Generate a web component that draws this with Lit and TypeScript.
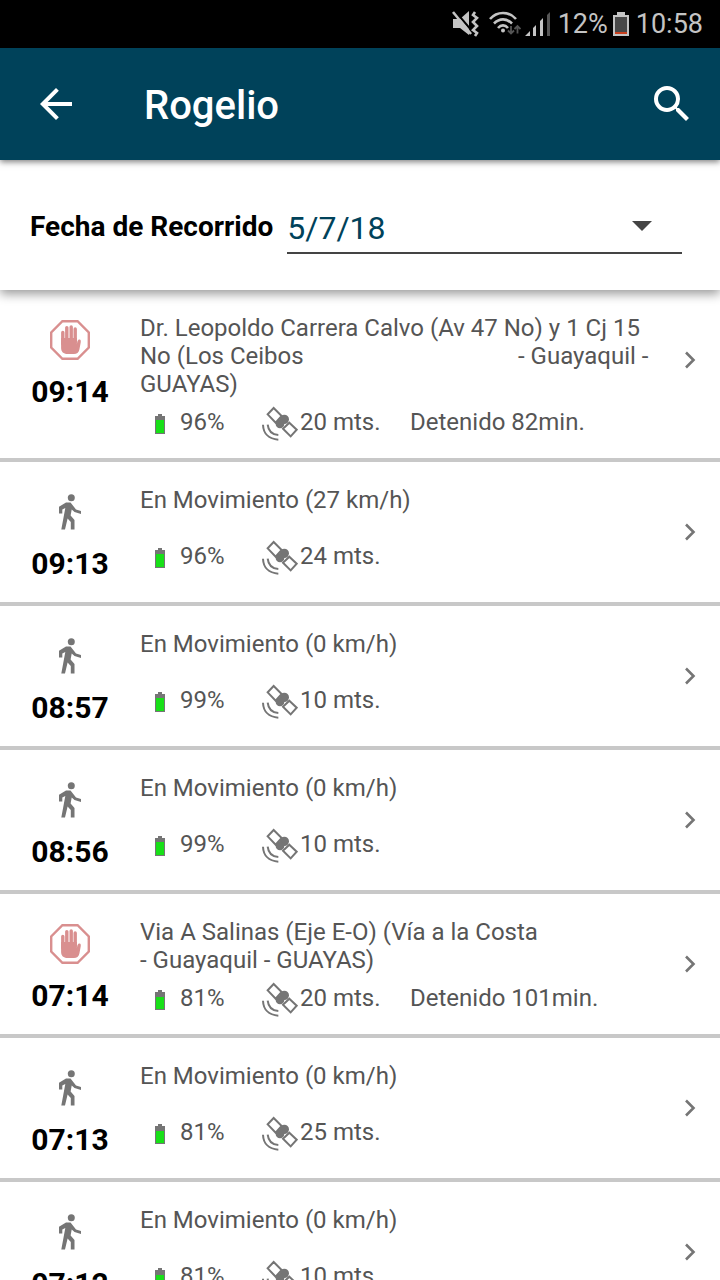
import { LitElement, html, css, svg, nothing } from "lit";
import { customElement, property } from "lit/decorators.js";

interface Stop {
  time: string;
  stopped: boolean;
  title: string;
  battery: number;
  accuracy: number;
  minutes?: number;
}

const gap = " ".repeat(36);

const stops: Stop[] = [
  { time: "09:14", stopped: true, title: `Dr. Leopoldo Carrera Calvo (Av 47 No) y 1 Cj 15 No (Los Ceibos${gap}- Guayaquil - GUAYAS)`, battery: 96, accuracy: 20, minutes: 82 },
  { time: "09:13", stopped: false, title: "En Movimiento (27 km/h)", battery: 96, accuracy: 24 },
  { time: "08:57", stopped: false, title: "En Movimiento (0 km/h)", battery: 99, accuracy: 10 },
  { time: "08:56", stopped: false, title: "En Movimiento (0 km/h)", battery: 99, accuracy: 10 },
  { time: "07:14", stopped: true, title: "Via A Salinas (Eje E-O) (Vía a la Costa\n- Guayaquil - GUAYAS)", battery: 81, accuracy: 20, minutes: 101 },
  { time: "07:13", stopped: false, title: "En Movimiento (0 km/h)", battery: 81, accuracy: 25 },
  { time: "07:12", stopped: false, title: "En Movimiento (0 km/h)", battery: 81, accuracy: 10 },
];

const handIcon = html`<svg width="40" height="40" viewBox="0 0 40 40" aria-hidden="true">
  <path d="M12.4 1.2h15.2L38.8 12.4v15.2L27.6 38.8H12.4L1.2 27.6V12.4z" fill="none" stroke="#d98f8f" stroke-width="2.4" />
  <path d="M12.8 24V12.4M16.8 22V7.6M21.2 22V7M25.2 22V9" fill="none" stroke="#d98f8f" stroke-width="3.4" stroke-linecap="round" />
  <path d="M11.1 18H26.9V24.5C27.2 22 27.6 19.5 29.4 19.5C31 19.6 30.9 21 30.7 22.5L29.4 29.5C28.8 32.6 26.8 34 24 34H17.5C13.5 34 11.1 31.8 11.1 28z" fill="#d98f8f" />
</svg>`;

const walkIcon = html`<svg width="40" height="40" viewBox="0 0 40 40" aria-hidden="true">
  <circle cx="21.3" cy="5.7" r="3.5" fill="#757575" />
  <path d="M16 10.500L20.500 10.500L22.500 13L26 17.500L31 19V22L24.500 20L21.700 17.500L20.600 23.500L24.500 28V37.500H20.800V30L17.600 26.500L15 37.500H11.300L15.300 16L12.300 17.500V21.500H9V14.800z" fill="#757575" />
</svg>`;

const batteryIcon = (level: number) => html`<svg width="10" height="20" viewBox="0 0 10 20" aria-hidden="true">
  <path d="M3 0h4v2h3v18H0V2h3z" fill="#757575" />
  ${svg`<rect x="1" y=${level > 90 ? 6 : 7} width="8" height=${level > 90 ? 13 : 12} fill="#18e018" />`}
</svg>`;

const satelliteIcon = html`<svg width="36" height="36" viewBox="0 0 108 108" aria-hidden="true">
  <g fill="none" stroke="#757575">
    <path d="M35 6L17 25L41 50L59 30zM82 50L104 71L86 91L63 68z" stroke-width="6" />
    <path d="M3 56C4 82 20 99 49 101M17 56C19 74 30 86 49 87" stroke-width="6" />
  </g>
  <circle cx="67" cy="40" r="14" fill="#757575" />
  <circle cx="54" cy="54" r="13" fill="#757575" />
</svg>`;

@customElement("status-bar")
class StatusBar extends LitElement {
  static styles = css`
    :host {
      display: flex;
      align-items: center;
      justify-content: flex-end;
      height: 48px;
      padding-right: 17px;
      background: #000;
      color: #c4c4c4;
      font-size: 27px;
      line-height: 48px;
    }
    svg { display: block; flex: none; }
    .mute { margin-right: 10px; }
    .wifi { margin-right: 4px; }
    .signal { margin-right: 8px; }
    .battery { margin: 0 7px 0 5px; }
  `;

  render() {
    return html`
      <svg class="mute" width="27" height="26" viewBox="0 0 27 26" aria-hidden="true">
        <path d="M1 8h7l9-8v24l-9-7H1z" fill="#c4c4c4" />
        <path d="M3 0l17 20" stroke="#000" stroke-width="2" />
        <path d="M1 1l18 22" stroke="#c4c4c4" stroke-width="2.6" />
        <path d="M23 1l-2 3 4 3-4 4 4 4-4 4 4 3-2 3" fill="none" stroke="#c4c4c4" stroke-width="2.6" />
      </svg>
      <svg class="wifi" width="32" height="26" viewBox="0 0 32 26" aria-hidden="true">
        <g fill="none" stroke="#c4c4c4" stroke-width="2.6">
          <path d="M1 8C8 0 20 0 27 8M5 12.5C10.500 7 17.500 7 23 12.500M9 17C12 13.500 16 13.500 19 17" />
        </g>
        <circle cx="14" cy="19.500" r="2" fill="#c4c4c4" />
        <path d="M22 15v7M19 19.500l3 3 3-3M28.500 22.500v-7M25.500 18l3-3 3 3" fill="none" stroke="#555" stroke-width="1.800" />
      </svg>
      <svg class="signal" width="25" height="24" viewBox="0 0 25 24" aria-hidden="true">
        <path d="M0 24l5-5v5zM8 24v-8l3-3v11zM15 24V9l3-3v18z" fill="#c4c4c4" />
        <path d="M22 24V3l3-3v24z" fill="#555" />
      </svg>
      <span>12%</span>
      <svg class="battery" width="16" height="24" viewBox="0 0 16 24" aria-hidden="true">
        <path d="M4 0h8v3h4v21H0V3h4z" fill="#c4c4c4" />
        <path d="M2 5h12v15H2z" fill="#484848" />
        <path d="M2 20h12v2H2z" fill="#c8401e" />
      </svg>
      <span>10:58</span>
    `;
  }
}

@customElement("stop-row")
class StopRow extends LitElement {
  @property({ attribute: false }) stop!: Stop;

  static styles = css`
    :host { display: block; }
    svg { display: block; }
    .row {
      display: grid;
      grid-template-columns: 140px 1fr 60px;
      min-height: 144px;
      box-sizing: border-box;
      border-bottom: 4px solid #c8c8c8;
      color: #555;
      text-decoration: none;
      font-size: 24px;
      line-height: 28px;
    }
    .when {
      display: flex;
      flex-direction: column;
      align-items: center;
      gap: 12px;
      padding-top: 30px;
    }
    .time {
      color: #000;
      font-size: 30px;
      line-height: 40px;
      font-weight: 700;
    }
    .body { padding: 24px 0 12px; }
    .title {
      min-height: 46px;
      white-space: pre-wrap;
    }
    .details {
      display: grid;
      grid-template-columns: 40px 82px 38px 110px auto;
      align-items: center;
      height: 48px;
    }
    .icon { padding-top: 4px; }
    .icon.battery { justify-self: center; }
    .chevron {
      justify-self: center;
      padding-top: 60px;
    }
  `;

  render() {
    const s = this.stop;
    return html`
      <a class="row" href="#">
        <div class="when">
          ${s.stopped ? handIcon : walkIcon}
          <span class="time">${s.time}</span>
        </div>
        <div class="body">
          <div class="title">${s.title}</div>
          <div class="details">
            <span class="icon battery">${batteryIcon(s.battery)}</span>
            <span>${s.battery}%</span>
            <span class="icon">${satelliteIcon}</span>
            <span>${s.accuracy} mts.</span>
            ${s.minutes ? html`<span>Detenido ${s.minutes}min.</span>` : nothing}
          </div>
        </div>
        <svg class="chevron" width="12" height="20" viewBox="0 0 12 20" aria-hidden="true">
          <path d="M2 2.500l7.500 7.500L2 17.500" fill="none" stroke="#757575" stroke-width="2.600" />
        </svg>
      </a>
    `;
  }
}

@customElement("app-root")
class AppRoot extends LitElement {
  static styles = css`
    :host {
      display: flex;
      flex-direction: column;
      height: 100vh;
      overflow: hidden;
      background: #fff;
      font-family: Roboto, sans-serif;
    }
    svg { display: block; }
    status-bar, .bar, .filter { flex: none; }
    .bar {
      position: relative;
      z-index: 2;
      display: flex;
      align-items: center;
      height: 112px;
      padding: 0 24px 0 32px;
      box-sizing: border-box;
      background: #00425a;
      box-shadow: 0 2px 6px rgba(0, 0, 0, 0.5);
    }
    .action {
      padding: 0;
      border: 0;
      background: none;
      color: #fff;
      cursor: pointer;
    }
    .heading {
      flex: 1;
      margin: 4px 0 0 64px;
      color: #fff;
      font-size: 40px;
      line-height: 50px;
      font-weight: 500;
    }
    .filter {
      position: relative;
      z-index: 1;
      display: flex;
      align-items: center;
      gap: 14px;
      height: 130px;
      padding: 4px 38px 0 30px;
      box-sizing: border-box;
      background: #fff;
      box-shadow: 0 4px 10px rgba(0, 0, 0, 0.4);
    }
    .label {
      font-size: 28px;
      line-height: 40px;
      font-weight: 700;
      color: #000;
    }
    .picker {
      flex: 1;
      display: grid;
      align-items: center;
      border-bottom: 2px solid #444;
    }
    .select, .arrow { grid-area: 1 / 1; }
    .select {
      appearance: none;
      width: 100%;
      height: 52px;
      padding: 4px 0 0;
      border: 0;
      border-radius: 0;
      background: none;
      color: #00425a;
      font-family: inherit;
      font-size: 32px;
    }
    .arrow {
      justify-self: end;
      margin-right: 30px;
      pointer-events: none;
    }
    .list {
      flex: 1;
      min-height: 0;
      margin: 0;
      padding: 0;
      list-style: none;
      overflow-y: auto;
      scrollbar-width: none;
    }
  `;

  render() {
    return html`
      <status-bar></status-bar>
      <header class="bar">
        <button class="action" aria-label="Atrás">
          <svg width="48" height="48" viewBox="0 0 24 24" aria-hidden="true">
            <path fill="currentColor" d="M20 11H7.830l5.590-5.590L12 4l-8 8 8 8 1.410-1.410L7.830 13H20v-2z" />
          </svg>
        </button>
        <h1 class="heading">Rogelio</h1>
        <button class="action" aria-label="Buscar">
          <svg width="48" height="48" viewBox="0 0 24 24" aria-hidden="true">
            <path fill="currentColor" d="M15.500 14h-.790l-.280-.270A6.471 6.471 0 0 0 16 9.500 6.500 6.500 0 1 0 9.500 16c1.610 0 3.090-.590 4.230-1.570l.270.280v.790l5 4.990L20.490 19l-4.990-5zm-6 0C7.010 14 5 11.990 5 9.500S7.010 5 9.500 5 14 7.010 14 9.500 11.990 14 9.500 14z" />
          </svg>
        </button>
      </header>
      <section class="filter">
        <label class="label" for="date">Fecha de Recorrido</label>
        <div class="picker">
          <select class="select" id="date">
            <option>5/7/18</option>
          </select>
          <svg class="arrow" width="20" height="10" viewBox="0 0 20 10" aria-hidden="true">
            <path d="M0 0h20L10 10z" fill="#444" />
          </svg>
        </div>
      </section>
      <ul class="list">
        ${stops.map((s) => html`<li><stop-row .stop=${s}></stop-row></li>`)}
      </ul>
    `;
  }
}
